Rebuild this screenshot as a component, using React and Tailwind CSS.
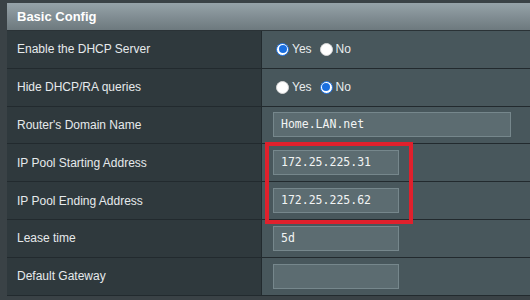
import React from "react";

function Radio({ checked }) {
  return checked ? (
    <span className="inline-flex h-[13px] w-[13px] items-center justify-center rounded-full border-[1.5px] border-[#1a6fe0] bg-white">
      <span className="h-[8px] w-[8px] rounded-full bg-[#1a6fe0]" />
    </span>
  ) : (
    <span className="inline-block h-[13px] w-[13px] rounded-full border border-[#d8d8d8] bg-white" />
  );
}

function RadioPair({ yes }) {
  return (
    <div className="ml-[3px] flex items-center text-[12px] text-[#e8ecee]">
      <Radio checked={yes} />
      <span className="ml-[3px]">Yes</span>
      <span className="ml-[8px] flex"><Radio checked={!yes} /></span>
      <span className="ml-[3px]">No</span>
    </div>
  );
}

function Input({ value, wide }) {
  return (
    <div
      className={`flex h-[25px] items-center border border-[#76878c] bg-[#5c6c71] pl-[7px] text-[11.5px] text-[#f2f4f4] ${
        wide ? "w-[238px]" : "w-[126px]"
      }`}
      style={{ fontFamily: '"DejaVu Sans Mono", "Liberation Mono", monospace' }}
    >
      {value}
    </div>
  );
}

const rows = [
  ["Enable the DHCP Server", <RadioPair yes />],
  ["Hide DHCP/RA queries", <RadioPair yes={false} />],
  ["Router's Domain Name", <Input value="Home.LAN.net" wide />],
  ["IP Pool Starting Address", <Input value="172.25.225.31" />],
  ["IP Pool Ending Address", <Input value="172.25.225.62" />],
  ["Lease time", <Input value="5d" />],
  ["Default Gateway", <Input value="" />],
];

export default function App() {
  return (
    <div
      className="relative h-[300px] w-[530px] overflow-hidden bg-[#3a4246] pl-[7px] pt-[3px]"
      style={{ fontFamily: '"Liberation Sans", Arial, sans-serif' }}
    >
      <div className="flex h-[28px] items-center border-b border-[#2a3236] bg-gradient-to-b from-[#96a3a9] to-[#6d797e] pl-[10px] text-[13px] font-bold text-white">
        Basic Config
      </div>
      {rows.map(([label, ctrl], i) => (
        <div key={i} className="flex h-[37.8px] border-b border-[#222a2e]">
          <div className="flex w-[255px] items-center border-r border-[#222a2e] bg-[#2f393d] pl-[10px] text-[12px] text-[#e6eaec]">
            {label}
          </div>
          <div className="flex flex-1 items-center bg-[#48575c] pl-[11px]">{ctrl}</div>
        </div>
      ))}
      <div className="pointer-events-none absolute left-[265px] top-[142px] h-[82px] w-[148px] border-[4px] border-[#e0202c]" />
    </div>
  );
}
